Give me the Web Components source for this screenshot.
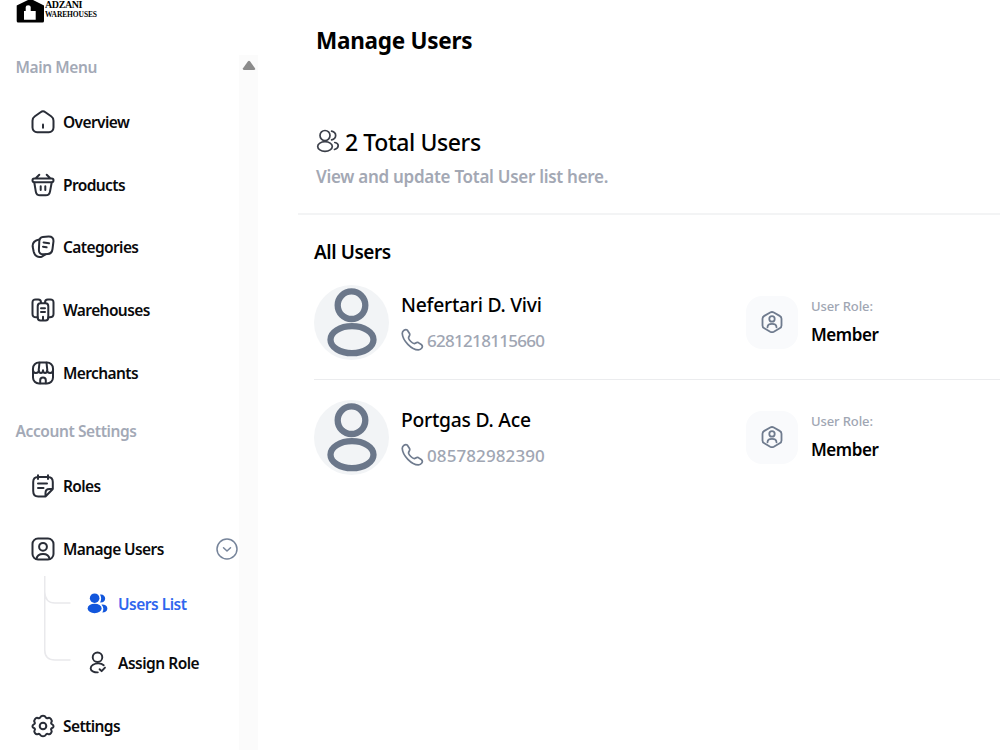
<!DOCTYPE html>
<html lang="en">
<head>
<meta charset="UTF-8">
<title>Manage Users</title>
<style>
    html, body {
        margin: 0;
        height: 100%;
        overflow: hidden;
        background: #fff;
    }
    body {
        display: flex;
        font-family: "Noto Sans", "Open Sans", sans-serif;
        font-weight: 500;
        color: #0a0a0c;
    }
</style>
</head>
<body>
<app-sidebar>
    <nav-section label="Main Menu">
        <nav-item icon="home">Overview</nav-item>
        <nav-item icon="basket">Products</nav-item>
        <nav-item icon="cards">Categories</nav-item>
        <nav-item icon="buildings">Warehouses</nav-item>
        <nav-item icon="shop">Merchants</nav-item>
    </nav-section>
    <nav-section label="Account Settings">
        <nav-item icon="note">Roles</nav-item>
        <nav-item icon="userSquare" expandable>Manage Users</nav-item>
        <nav-submenu>
            <nav-item icon="usersFilled" sub active>Users List</nav-item>
            <nav-item icon="userCheck" sub>Assign Role</nav-item>
        </nav-submenu>
        <nav-item icon="gear">Settings</nav-item>
    </nav-section>
</app-sidebar>
<users-page heading="Manage Users">
    <user-row name="Nefertari D. Vivi" phone="6281218115660" role-name="Member" style="--digit-spacing: -0.7px"></user-row>
    <user-row name="Portgas D. Ace" phone="085782982390" role-name="Member" style="--digit-spacing: 0.1px"></user-row>
</users-page>

<script>
const ICONS = {
    home: '<path d="M9.600 2.200 3.900 6.300C2.500 7.300 1.500 9 1.500 10.700V17.600A4.600 4.600 0 0 0 6.100 22.200H17.900A4.600 4.600 0 0 0 22.500 17.600V10.700C22.500 9 21.500 7.300 20.100 6.300L14.400 2.200C13 1.200 11 1.200 9.600 2.200Z"/><path d="M12 14.600V17.800"/>',
    basket: '<path d="M8.300 1.700 5 5M15.700 1.700 19 5M3.200 5.500H20.800C22 5.500 22.500 6.200 22.500 7.300S22 9.300 20.800 9.300H3.200C2 9.300 1.500 8.500 1.500 7.300S2 5.500 3.200 5.500Z"/><path d="M3.300 9.500 4.800 18.600C5.200 20.900 6.100 22.300 9 22.300H14.700C17.900 22.300 18.600 20.900 19 18.600L20.700 9.500M9.700 13.300V17M14.300 13.300V17"/>',
    cards: '<path d="M11.800 1.900 17.500 1.500C21 1.400 22.700 3.200 22.500 6.200L21.500 14C21.100 17.400 19.700 18.800 16.600 19L12.800 19.300C9.400 19.500 7.700 17.700 7.900 14.600L8.300 6.200C8.500 3.500 9.500 2.100 11.800 1.900Z"/><path d="M8.300 4.400C3.500 5.300 1.200 7.500 1.700 11.800L2.700 16.800C3.700 20.900 6.800 22.800 10.800 21.700L14.500 19.500M12.600 7.500 18 8.300M12 11.700 15.600 12.300"/>',
    buildings: '<path d="M6.700 19.200H5.200C2.700 19.200 1.500 18.300 1.500 16V4.600C1.500 2.300 2.600 1.400 4.700 1.400H7.200C9 1.400 10 2.200 10 4.500V5M17.300 19.200H18.800C21.300 19.200 22.500 18.300 22.500 16V4.600C22.500 2.300 21.400 1.400 19.300 1.400H16.800C15 1.400 14 2.200 14 4.500V5"/><path d="M9.500 5.300H14.500Q17.300 5.300 17.300 8.300V19.500Q17.300 22.500 14.500 22.500H9.500Q6.700 22.500 6.700 19.500V8.300Q6.700 5.300 9.500 5.300ZM10 10.300H14M10 14H14M12 18.800V22.300"/>',
    shop: '<rect x="2" y="1.500" width="20" height="21" rx="6"/><path d="M8.500 1.700 7.700 9.200M15.500 1.700 16.300 9.200M1.900 8.500C1.700 13.100 7.500 13.100 7.900 9.200C7.900 12.800 12 12.800 12 9.200C12 12.800 16.100 12.800 16.100 9.200C16.500 13.100 22.300 13.100 22.100 8.500M9.200 22.300V19.200C9.200 15.700 14.800 15.700 14.800 19.200V22.300"/>',
    note: '<path d="M7 1.300V5M17 1.300V5M21.800 15V8C21.800 4.700 20.200 3 17 3H7C3.800 3 2.200 4.700 2.200 8V17C2.200 20.500 3.800 22.500 7.200 22.500H14.500L21.800 15H18.300C15.400 15 14.500 16.200 14.500 19V22.500M7 9.500H16M7 14H12.500"/>',
    userSquare: '<rect x="1.500" y="1.500" width="21" height="21" rx="5.500"/><circle cx="12" cy="9.800" r="3.900"/><path d="M5.500 21.800C6.500 15.300 17.500 15.300 18.500 21.800"/>',
    gear: '<circle cx="12" cy="12" r="3.300"/><path d="M9.300 3.300C10.300 1.300 13.700 1.300 14.700 3.300C15.400 4.500 16 4.700 17.300 4C19.200 3.200 21.500 6.400 20.500 8C19.800 9.300 20 9.800 21.200 10.300C23 11.200 23 13.500 21.200 14C19.900 14.600 19.700 15.200 20.400 16.300C21.500 18 19.200 21 17.300 20.100C16 19.500 15.400 19.700 14.700 20.900C13.700 22.800 10.300 22.800 9.300 20.900C8.600 19.700 8 19.500 6.700 20.100C4.800 21 2.500 18 3.600 16.300C4.300 15.200 4.100 14.600 2.800 14C1 13.500 1 11.200 2.800 10.300C4 9.800 4.200 9.300 3.500 8C2.500 6.400 4.800 3.200 6.700 4C8 4.700 8.600 4.500 9.300 3.300Z"/>',
    usersFilled: '<g fill="currentColor" stroke="none"><circle cx="9" cy="6.500" r="5"/><ellipse cx="9" cy="17.200" rx="7.300" ry="5"/><path d="M14.700 11C16.200 8.500 16.200 5.200 14.600 2.700C17.500 2 20 4 20 6.800C20 9.700 17.500 11.500 14.700 11ZM17 21.500C18.700 18.800 18.500 15.500 16.200 13.200C19.700 12.900 22.300 14.700 22.300 17.100C22.300 19.600 20 21.300 17 21.500Z"/></g>',
    userCheck: '<circle cx="12" cy="6.500" r="5"/><path d="M18.500 14.800C15.800 12.500 10.500 12.300 7.300 14.400C3.900 16.600 4.100 20 7.500 21.500Q9.500 22.400 12.300 22.300M14.200 19 16.300 21 19.800 17.300"/>',
    users: '<circle cx="9" cy="6.500" r="5"/><ellipse cx="9" cy="17.500" rx="7.300" ry="4.800"/><path d="M15.600 2.200C21 3.500 21 9.800 15.600 10.800M18.800 13.500C23.300 14.300 23.500 19.200 18.500 20.500"/>',
    chevron: '<circle cx="12" cy="12" r="10"/><path d="m8.500 10.700 3.500 3.300 3.500-3.300"/>',
    phone: '<path d="M2.300 5.800C2 2.700 5.500.7 7.400 2.200L9.500 5.500C10.700 7.700 8.200 8.500 8.600 10.200C9.200 12.200 12.200 15.200 13.900 15.500C15.600 15.900 16.300 13.500 18.300 14.600L21.600 16.800C23.500 18.800 21.200 22 18.300 21.900C11.500 21.700 2.600 12.500 2.300 5.800Z"/>',
    role: '<path d="M10.200 2.500 4.300 5.900C3.200 6.500 2.500 7.500 2.500 8.800V15.400C2.500 16.700 3.200 17.700 4.300 18.300L10.200 21.700C11.300 22.300 12.700 22.300 13.800 21.700L19.700 18.300C20.800 17.700 21.500 16.700 21.500 15.400V8.800C21.500 7.500 20.800 6.500 19.700 5.900L13.800 2.500C12.700 1.900 11.300 1.900 10.200 2.500Z"/><circle cx="12" cy="8.900" r="2.700"/><path d="M7.500 17.300C7.500 12.800 16.500 12.800 16.500 17.300"/>'
};

// Outline icon on a 24x24 grid
class UiIcon extends HTMLElement {
    constructor() {
        super();
        this.attachShadow({ mode: 'open' });
    }

    connectedCallback() {
        const size = this.getAttribute('size') || 24;
        const weight = this.getAttribute('weight') || 2;
        this.shadowRoot.innerHTML = `
            <style>
                :host { display: block; flex: none; line-height: 0; }
                svg { fill: none; stroke: currentColor; stroke-linecap: round; stroke-linejoin: round; }
            </style>
            <svg width="${size}" height="${size}" viewBox="0 0 24 24" stroke-width="${weight}">${ICONS[this.getAttribute('name')]}</svg>
        `;
    }
}

class AppSidebar extends HTMLElement {
    constructor() {
        super();
        this.attachShadow({ mode: 'open' });
        this.shadowRoot.innerHTML = `
            <style>
                :host {
                    display: flex;
                    flex-direction: column;
                    flex: none;
                    width: 258px;
                    height: 750px;
                    overflow: hidden;
                }
                .brand {
                    display: flex;
                    flex: none;
                    height: 55px;
                    padding-left: 16px;
                    color: #000;
                    font-family: "Liberation Serif", serif;
                    font-weight: 700;
                }
                .brand-text {
                    display: flex;
                    flex-direction: column;
                    white-space: nowrap;
                }
                .first { font-size: 10px; line-height: 10px; letter-spacing: -0.4px; }
                .second { font-size: 7.500px; line-height: 9px; letter-spacing: -0.1px; }
                .panel {
                    display: flex;
                    flex: 1;
                    min-height: 0;
                }
                nav { flex: 1; min-width: 0; }
                .scrollbar {
                    width: 19px;
                    background: #fbfbfb;
                    display: flex;
                    justify-content: center;
                }
                .scrollbar svg { margin-top: 5px; }
            </style>
            <div class="brand">
                <svg width="29" height="23" viewBox="0 0 29 23">
                    <path d="M.7 5.500 12 0H17L28 5.500V21Q28 22.500 26.500 22.500H2.200Q.7 22.500 .7 21Z"/>
                    <path fill="#fff" d="M8 11H9.700V7Q9.700 5.200 12.200 5.200T14.700 7V11H19.700V19.700H8Z"/>
                </svg>
                <div class="brand-text">
                    <span class="first">ADZANI</span>
                    <span class="second">WAREHOUSES</span>
                </div>
            </div>
            <div class="panel">
                <nav><slot></slot></nav>
                <div class="scrollbar">
                    <svg width="14" height="11" viewBox="0 0 14 11"><path fill="#8b8b8b" d="M6 1.300Q7 0 8 1.300L13 8.300Q13.800 10 12 10H2Q.2 10 1 8.300Z"/></svg>
                </div>
            </div>
        `;
    }
}

class NavSection extends HTMLElement {
    constructor() {
        super();
        this.attachShadow({ mode: 'open' });
        this.shadowRoot.innerHTML = `
            <style>
                :host { display: block; padding-bottom: 15px; }
                .label {
                    height: 24px;
                    margin-bottom: 11.500px;
                    padding-left: 15.500px;
                    font-size: 15.500px;
                    line-height: 24px;
                    font-weight: 600;
                    letter-spacing: -0.4px;
                    color: #a3a9b6;
                    white-space: nowrap;
                }
            </style>
            <div class="label">${this.getAttribute('label')}</div>
            <slot></slot>
        `;
    }
}

class NavItem extends HTMLElement {
    constructor() {
        super();
        this.attachShadow({ mode: 'open' });
        const arrow = this.hasAttribute('expandable')
            ? '<ui-icon class="arrow" name="chevron" weight="1.5"></ui-icon>' : '';
        this.shadowRoot.innerHTML = `
            <style>
                :host {
                    display: flex;
                    align-items: center;
                    height: 62.750px;
                    padding-left: 31px;
                    gap: 8px;
                    font-size: 15.500px;
                    line-height: 24px;
                    font-weight: 600;
                    letter-spacing: -0.6px;
                    white-space: nowrap;
                }
                :host([sub]) { height: 59px; padding-left: 15px; gap: 9px; letter-spacing: -0.5px; }
                :host([active]) { color: #2f66ee; }
                ui-icon { color: #292d37; }
                :host([active]) ui-icon { color: #1256dc; }
                .label { flex: 1; }
                .arrow { color: #76849a; }
            </style>
            <ui-icon name="${this.getAttribute('icon')}" size="${this.hasAttribute('sub') ? 23 : 24}"></ui-icon>
            <span class="label"><slot></slot></span>${arrow}
        `;
    }
}

// Nested items with the branch lines on their left
class NavSubmenu extends HTMLElement {
    constructor() {
        super();
        this.attachShadow({ mode: 'open' });
        this.shadowRoot.innerHTML = `
            <style>
                :host {
                    display: flex;
                    margin: -6px 0 2.750px;
                    padding-left: 44px;
                }
                svg { flex: none; fill: none; stroke: #e9e9ec; stroke-width: 1.500; }
                .items { flex: 1; }
            </style>
            <svg width="27" height="118" viewBox="0 0 27 118">
                <path d="M.75 2V76Q.75 86 11 86H26.500M.75 18Q1 29 11 29H26.500"/>
            </svg>
            <div class="items"><slot></slot></div>
        `;
    }
}

class UsersPage extends HTMLElement {
    constructor() {
        super();
        this.attachShadow({ mode: 'open' });
        this.shadowRoot.innerHTML = `
            <style>
                :host { display: block; flex: 1; min-width: 0; white-space: nowrap; color: #000; }
                h1, h2, h3, p { margin: 0; }
                h1 {
                    padding: 25px 0 0 58px;
                    font-size: 22.500px;
                    line-height: 32px;
                    font-weight: 700;
                    letter-spacing: -0.25px;
                }
                .summary {
                    margin: 68px 0 0 40px;
                    padding: 0 0 21px 18px;
                    border-bottom: 2px solid #f3f4f5;
                }
                h2 {
                    display: flex;
                    align-items: center;
                    gap: 5px;
                    font-size: 23px;
                    line-height: 34px;
                    font-weight: 500;
                    letter-spacing: -0.4px;
                }
                h2 ui-icon { color: #3b3f49; margin-top: -2px; }
                .summary p {
                    font-size: 17px;
                    line-height: 30px;
                    font-weight: 600;
                    letter-spacing: -0.28px;
                    color: #a3a8b4;
                    margin-top: 3px;
                }
                .list { padding-left: 56px; }
                h3 {
                    padding: 23px 0 18px;
                    font-size: 19px;
                    line-height: 29px;
                    font-weight: 600;
                    letter-spacing: -0.45px;
                }
            </style>
            <h1>${this.getAttribute('heading')}</h1>
            <section class="summary">
                <h2><ui-icon name="users" weight="1.7"></ui-icon><span>2 Total Users</span></h2>
                <p>View and update Total User list here.</p>
            </section>
            <section class="list">
                <h3>All Users</h3>
                <slot></slot>
            </section>
        `;
    }
}

class UserRow extends HTMLElement {
    constructor() {
        super();
        this.attachShadow({ mode: 'open' });
        this.shadowRoot.innerHTML = `
            <style>
                :host {
                    display: flex;
                    align-items: center;
                    height: 74px;
                    padding-bottom: 20px;
                    margin-bottom: 20px;
                    border-bottom: 1px solid #ebecee;
                }
                :host(:last-of-type) { border-bottom: none; }
                .avatar { flex: none; }
                .person { width: 345px; padding-left: 12px; box-sizing: border-box; }
                .name {
                    font-size: 19.300px;
                    line-height: 30px;
                    letter-spacing: -0.25px;
                    font-weight: 520;
                }
                .phone {
                    display: flex;
                    align-items: center;
                    gap: 3px;
                    margin-top: 7px;
                    margin-bottom: -1px;
                    font-size: 17px;
                    line-height: 28px;
                    letter-spacing: var(--digit-spacing, 0);
                    color: #a0a6b3;
                }
                .phone ui-icon { color: #6f7b8e; margin: -2px 0 0 -1px; }
                .tile {
                    display: grid;
                    place-items: center;
                    width: 52px;
                    height: 53px;
                    border-radius: 16px;
                    background: #f9fafc;
                    color: #6f7b8e;
                    margin: 0 13px 0 12px;
                }
                .details { margin-top: -1px; }
                .caption {
                    font-size: 13px;
                    line-height: 22px;
                    color: #a0a6b3;
                    letter-spacing: -0.1px;
                }
                .role {
                    font-size: 17px;
                    line-height: 26px;
                    margin-top: 5px;
                    font-weight: 600;
                    letter-spacing: -0.45px;
                }
            </style>
            <svg class="avatar" width="75" height="75" viewBox="0 0 75 75">
                <circle cx="37.500" cy="37.500" r="37.500" fill="#f2f4f6"/>
                <g fill="none" stroke="#6b778a" stroke-width="6.300">
                    <circle cx="37.500" cy="20.200" r="13.800"/>
                    <ellipse cx="38" cy="54.700" rx="21.500" ry="13.500"/>
                </g>
            </svg>
            <div class="person">
                <div class="name">${this.getAttribute('name')}</div>
                <div class="phone"><ui-icon name="phone" weight="1.7"></ui-icon><span>${this.getAttribute('phone')}</span></div>
            </div>
            <div class="tile"><ui-icon name="role" weight="1.8"></ui-icon></div>
            <div class="details">
                <div class="caption">User Role:</div>
                <div class="role">${this.getAttribute('role-name')}</div>
            </div>
        `;
    }
}

customElements.define('ui-icon', UiIcon);
customElements.define('app-sidebar', AppSidebar);
customElements.define('nav-section', NavSection);
customElements.define('nav-item', NavItem);
customElements.define('nav-submenu', NavSubmenu);
customElements.define('users-page', UsersPage);
customElements.define('user-row', UserRow);
</script>
</body>
</html>
